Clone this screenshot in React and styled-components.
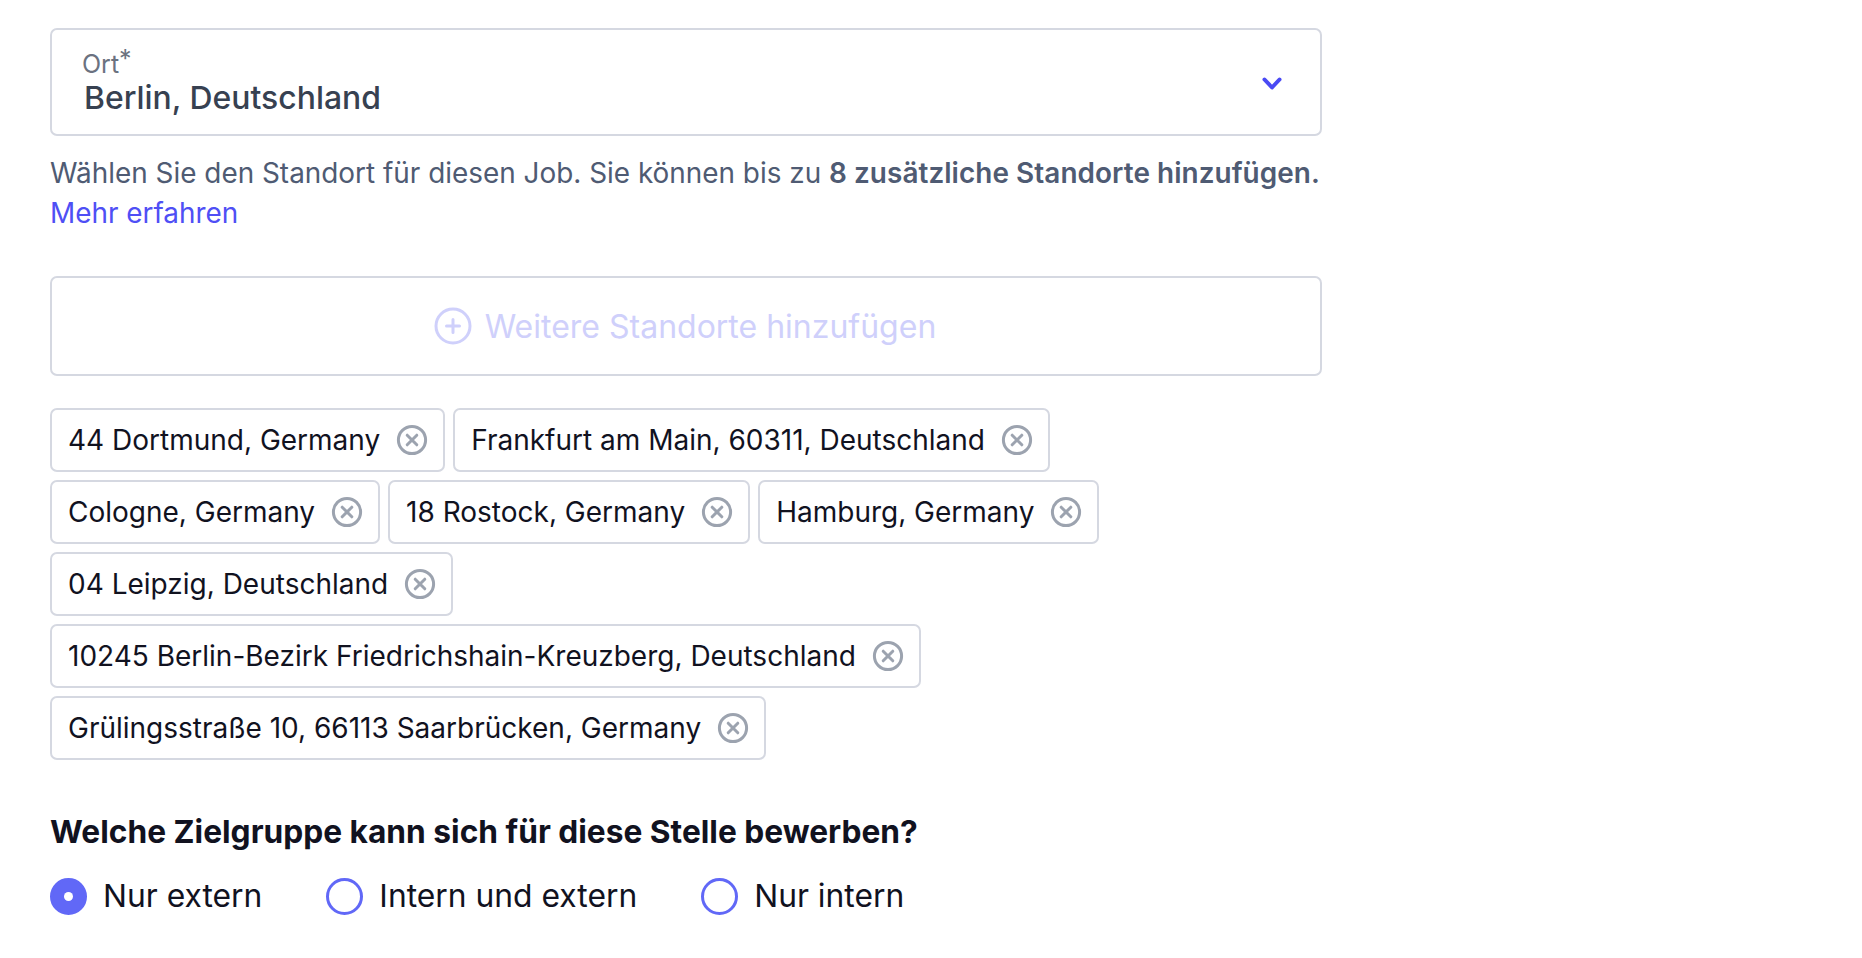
import React from 'react';
import styled, { createGlobalStyle } from 'styled-components';

const GlobalStyle = createGlobalStyle`
  html, body {
    margin: 0;
    padding: 0;
    background: #fff;
    font-family: Inter, "Liberation Sans", sans-serif;
    overflow: hidden;
  }
`;

const Page = styled.div`
  width: 1272px;
  padding: 28px 0 0 50px;
`;

const SelectBox = styled.div`
  display: flex;
  align-items: center;
  justify-content: space-between;
  box-sizing: border-box;
  height: 108px;
  padding: 0 36px 0 30px;
  border: 2px solid #d5d8e1;
  border-radius: 7px;
`;

const SelectText = styled.div`
  display: flex;
  flex-direction: column;
  padding-top: 3px;
`;

const SelectLabel = styled.span`
  font-size: 25px;
  line-height: 29px;
  color: #6b7280;
  sup {
    font-size: 25px;
    line-height: 0;
    vertical-align: 5px;
  }
`;

const SelectValue = styled.span`
  margin-left: 2px;
  font-size: 31.9px;
  line-height: 38px;
  font-weight: 500;
  color: #374151;
`;

const ChevronWrap = styled.span`
  display: flex;
  margin-top: 3px;
`;

const Help = styled.p`
  margin: 17px 0 0;
  font-size: 27.9px;
  line-height: 40px;
  white-space: nowrap;
  color: #4f5b73;
  b {
    font-weight: 600;
    letter-spacing: 0.07px;
  }
`;

const Link = styled.a`
  color: #4f4ff5;
`;

const AddBox = styled.div`
  display: flex;
  align-items: center;
  justify-content: center;
  gap: 13px;
  box-sizing: border-box;
  height: 100px;
  margin-top: 43px;
  padding-right: 2px;
  border: 2px solid #d5d8e1;
  border-radius: 7px;
  font-size: 32px;
  color: #cfd0fb;
`;

const Chips = styled.div`
  display: flex;
  flex-wrap: wrap;
  gap: 8px;
  width: 1100px;
  margin-top: 32px;
`;

const Chip = styled.div`
  display: flex;
  align-items: center;
  gap: 16px;
  box-sizing: border-box;
  height: 64px;
  padding: 0 15px 0 16px;
  border: 2px solid #d5d8e1;
  border-radius: 7px;
  font-size: 28px;
  color: #11121f;
`;

const Heading = styled.h2`
  margin: 52px 0 0;
  font-size: 31.7px;
  line-height: 40px;
  font-weight: 700;
  color: #11121f;
`;

const RadioRow = styled.div`
  display: flex;
  gap: 64px;
  margin-top: 24px;
`;

const RadioItem = styled.label`
  display: flex;
  align-items: center;
  gap: 16px;
  font-size: 31.8px;
  line-height: 40px;
  color: #11121f;
`;

const RadioDot = styled.span`
  display: flex;
  align-items: center;
  justify-content: center;
  box-sizing: border-box;
  width: 37px;
  height: 37px;
  border-radius: 50%;
  border: 3px solid #6168f7;
  background: ${(props) => (props.checked ? '#6168f7' : '#fff')};
  &::after {
    content: '';
    display: ${(props) => (props.checked ? 'block' : 'none')};
    width: 9px;
    height: 9px;
    border-radius: 50%;
    background: #fff;
  }
`;

const Chevron = () => (
  <svg width="24" height="24" viewBox="0 0 24 24" fill="none" stroke="#4a4af4" strokeWidth="4" strokeLinecap="round" strokeLinejoin="round">
    <path d="M4.5 7.5 12 15.5l7.5-8" />
  </svg>
);

const PlusCircle = () => (
  <svg width="38" height="38" viewBox="0 0 38 38" fill="none" stroke="#cfd0fb" strokeWidth="3" strokeLinecap="round">
    <circle cx="19" cy="19" r="17" />
    <path d="M19 12.5v13M12.5 19h13" />
  </svg>
);

const CloseCircle = () => (
  <svg width="32" height="32" viewBox="0 0 32 32" fill="none" stroke="#9ca3af" strokeWidth="3" strokeLinecap="round">
    <circle cx="16" cy="16" r="13.6" />
    <path d="M11.2 11.2l9.6 9.6M20.8 11.2l-9.6 9.6" />
  </svg>
);

const locations = [
  '44 Dortmund, Germany',
  'Frankfurt am Main, 60311, Deutschland',
  'Cologne, Germany',
  '18 Rostock, Germany',
  'Hamburg, Germany',
  '04 Leipzig, Deutschland',
  '10245 Berlin-Bezirk Friedrichshain-Kreuzberg, Deutschland',
  'Grülingsstraße 10, 66113 Saarbrücken, Germany',
];

const App = () => (
  <Page>
    <GlobalStyle />
    <SelectBox>
      <SelectText>
        <SelectLabel>Ort<sup>*</sup></SelectLabel>
        <SelectValue>Berlin, Deutschland</SelectValue>
      </SelectText>
      <ChevronWrap><Chevron /></ChevronWrap>
    </SelectBox>
    <Help>
      Wählen Sie den Standort für diesen Job. Sie können bis zu <b>8 zusätzliche Standorte hinzufügen.</b>
      <br />
      <Link>Mehr erfahren</Link>
    </Help>
    <AddBox>
      <PlusCircle />
      Weitere Standorte hinzufügen
    </AddBox>
    <Chips>
      {locations.map((name) => (
        <Chip key={name}>
          {name}
          <CloseCircle />
        </Chip>
      ))}
    </Chips>
    <Heading>Welche Zielgruppe kann sich für diese Stelle bewerben?</Heading>
    <RadioRow>
      <RadioItem><RadioDot checked />Nur extern</RadioItem>
      <RadioItem><RadioDot />Intern und extern</RadioItem>
      <RadioItem><RadioDot />Nur intern</RadioItem>
    </RadioRow>
  </Page>
);

export default App;
